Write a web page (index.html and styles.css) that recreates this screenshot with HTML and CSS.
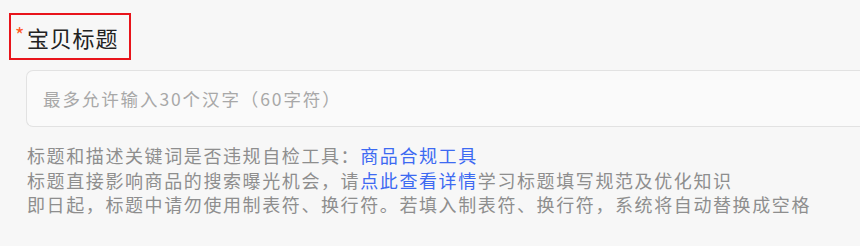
FILE: index.html
```html
<!DOCTYPE html>
<html lang="zh-CN">
<head>
<meta charset="utf-8">
<title>宝贝标题</title>
<link rel="stylesheet" href="styles.css">
</head>
<body>
<div class="field">
  <div class="label-box"><span class="req">*</span><span class="label">宝贝标题</span></div>
  <div class="input-wrap"><input class="title-input" type="text" placeholder="最多允许输入30个汉字（60字符）"></div>
  <div class="help">
    <p>标题和描述关键词是否违规自检工具：<a class="link" href="#">商品合规工具</a></p>
    <p>标题直接影响商品的搜索曝光机会，请<a class="link" href="#">点此查看详情</a>学习标题填写规范及优化知识</p>
    <p>即日起，标题中请勿使用制表符、换行符。若填入制表符、换行符，系统将自动替换成空格</p>
  </div>
</div>
</body>
</html>
```
FILE: styles.css
```css
html, body {
  margin: 0;
  padding: 0;
  background: #f7f7f7;
  overflow: hidden;
  width: 860px;
  height: 246px;
}
body {
  font-family: "Noto Sans CJK SC", "Noto Sans", sans-serif;
}
.field {
  padding-top: 13px;
}
.label-box {
  margin-left: 9px;
  width: 118px;
  height: 43px;
  border: 2px solid #e8141b;
  display: flex;
  align-items: center;
  box-sizing: content-box;
}
.req {
  color: #ff5a1f;
  font-size: 20px;
  margin-left: 4px;
  width: 12px;
  position: relative;
  top: -2px;
}
.label {
  color: #222;
  font-size: 22px;
  letter-spacing: 0.8px;
  line-height: 1;
}
.input-wrap {
  margin-top: 10px;
  margin-left: 26px;
}
.title-input {
  display: block;
  width: 834px;
  height: 57px;
  box-sizing: border-box;
  border: 1px solid #e2e2e2;
  border-right: none;
  border-radius: 7px 0 0 7px;
  background: #fafafa;
  padding: 0 0 0 16px;
  font-family: "Noto Sans CJK SC", "Noto Sans", sans-serif;
  font-size: 17.5px;
  letter-spacing: 1.9px;
  outline: none;
}
.title-input::placeholder {
  color: #a8a8a8;
}
.help {
  margin: 16px 0 0 27px;
  color: #8e8e8e;
  font-size: 18px;
  letter-spacing: 1.6px;
  line-height: 24.5px;
}
.help p {
  margin: 0;
  white-space: nowrap;
}
.link {
  color: #3d6af2;
  text-decoration: none;
}
```
